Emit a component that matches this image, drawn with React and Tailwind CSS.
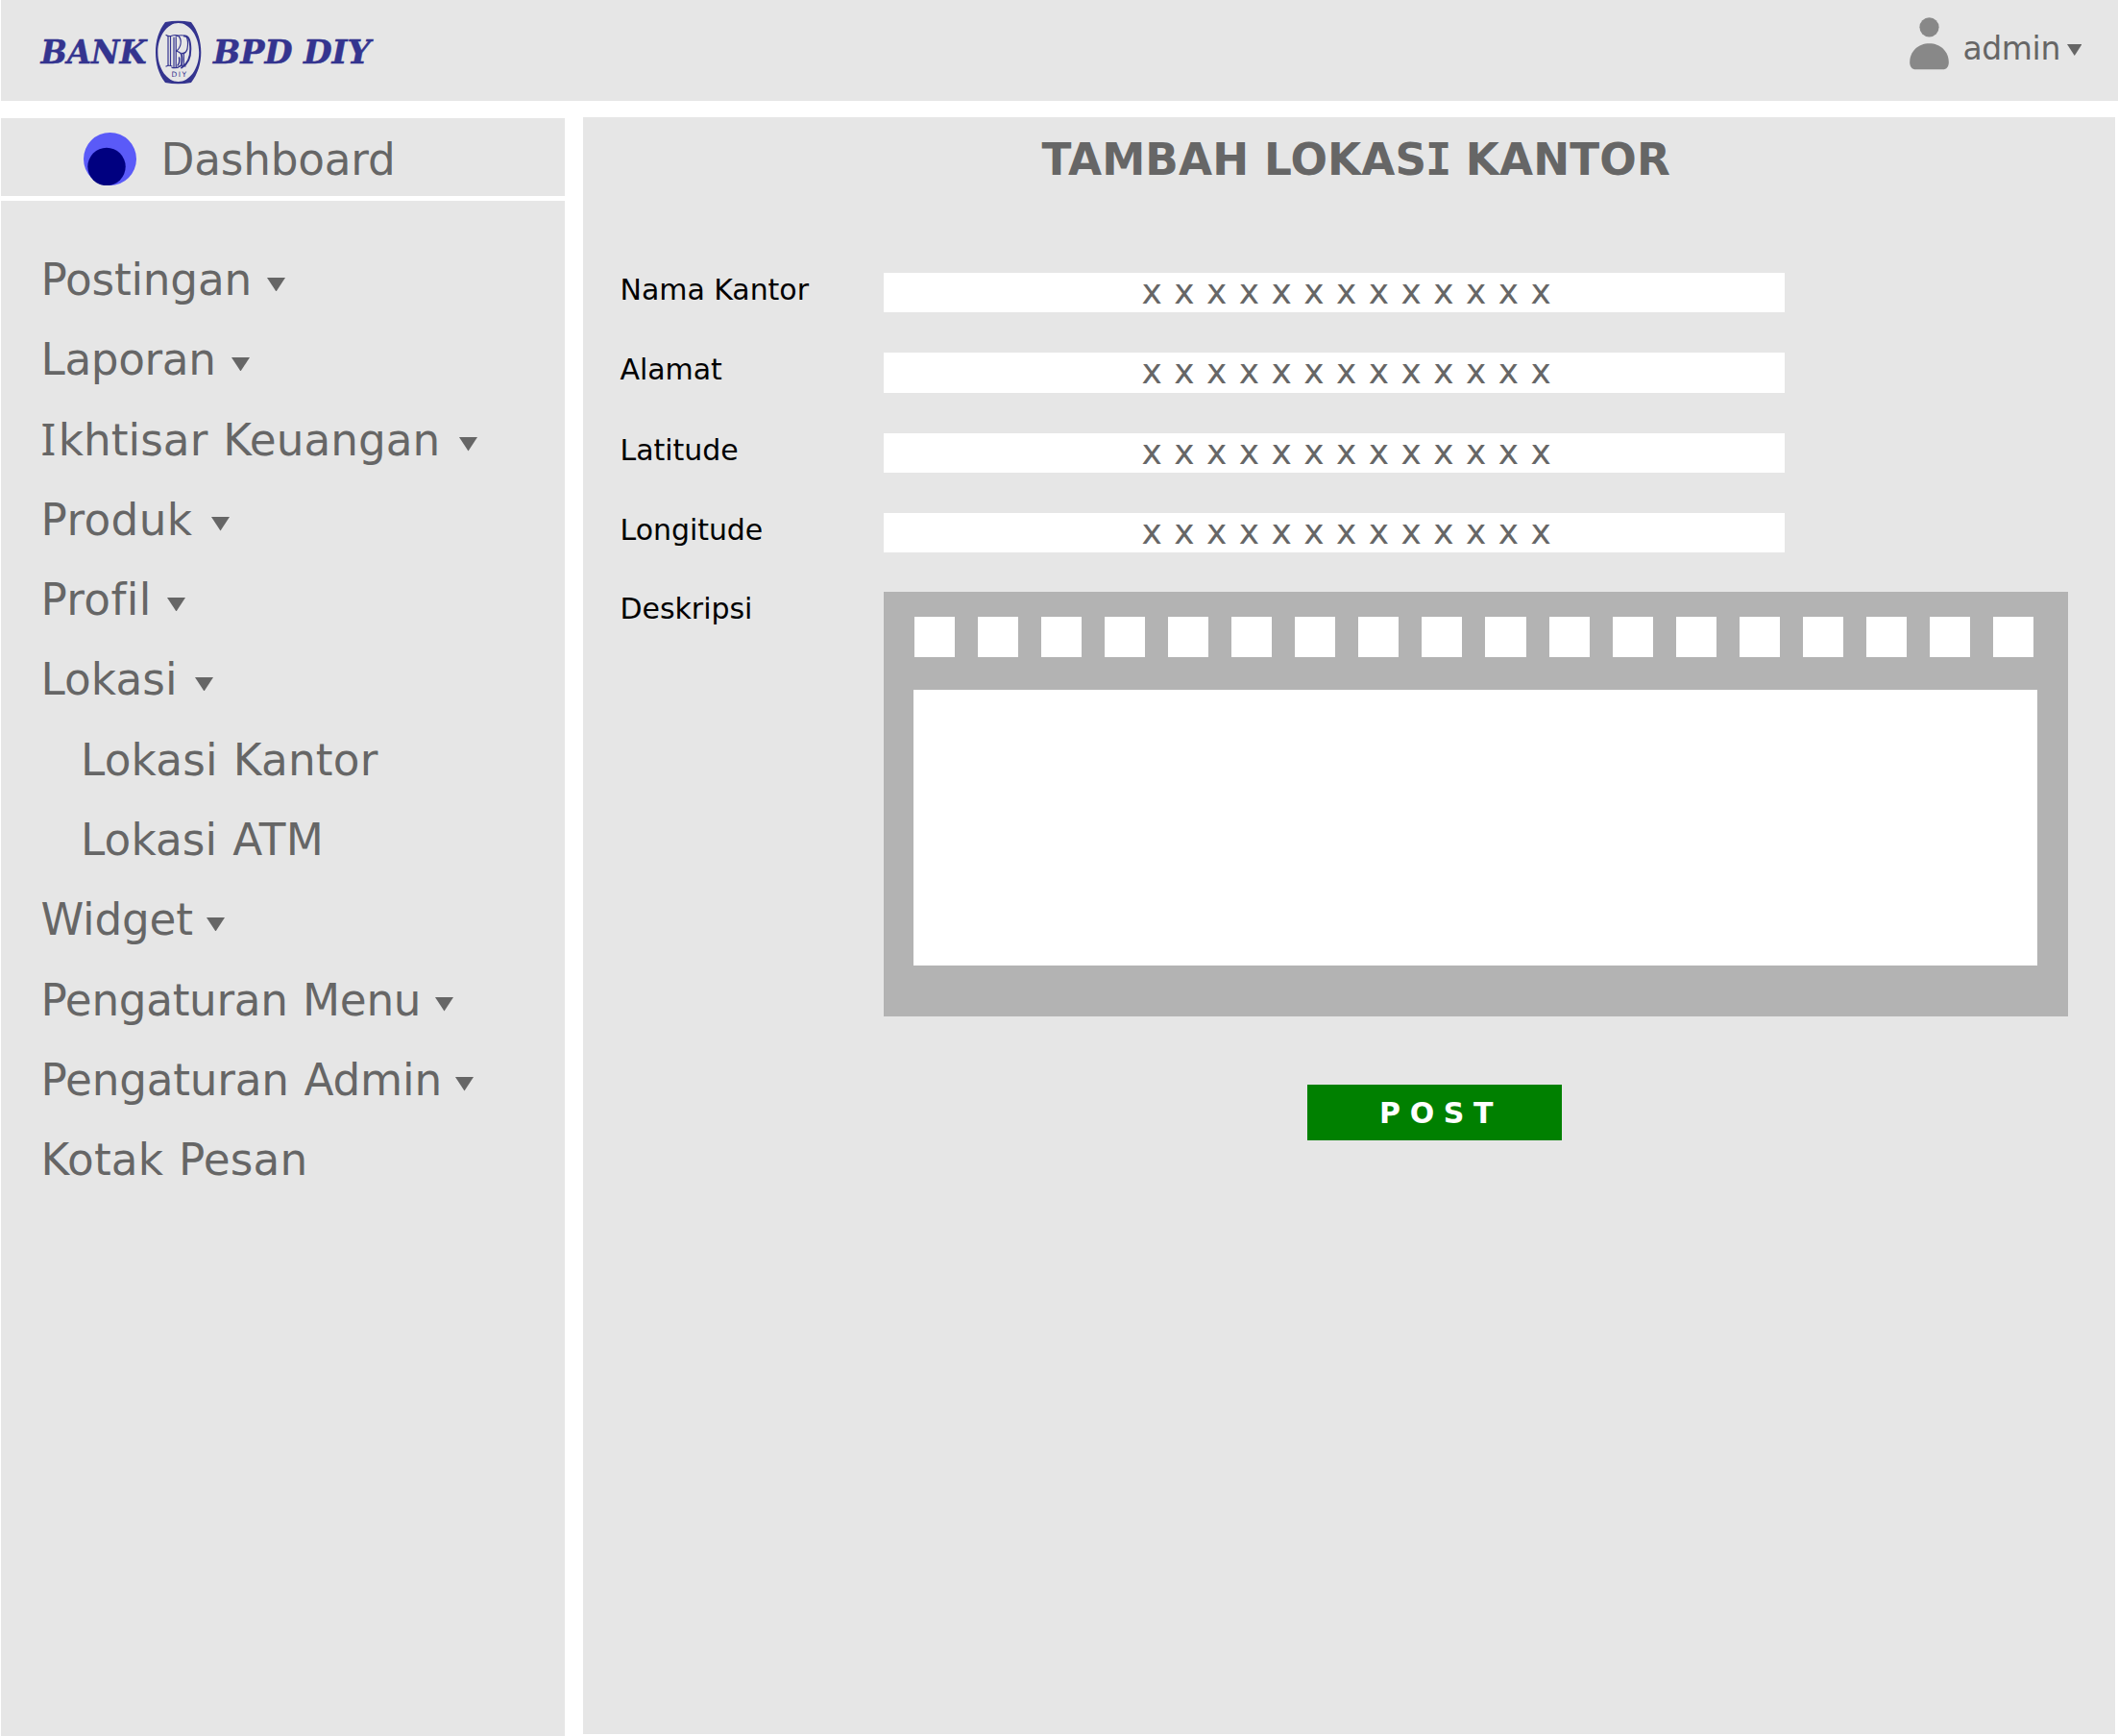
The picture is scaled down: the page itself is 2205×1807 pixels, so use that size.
import React from "react";

const menu = [
  { label: "Postingan", width: "w-[235px]", tracking: "tracking-[-0.2px]" },
  { label: "Laporan", width: "w-[198px]", tracking: "tracking-[-0.35px]" },
  { label: "Ikhtisar Keuangan", width: "w-[435px]", tracking: "tracking-[0.05px]", serifInitial: true },
  { label: "Produk", width: "w-[177px]", tracking: "tracking-[0.4px]" },
  { label: "Profil", width: "w-[131px]", tracking: "tracking-[0.35px]" },
  { label: "Lokasi", width: "w-[160px]", tracking: "tracking-[0.1px]" },
  { label: "Lokasi Kantor", child: true, tracking: "tracking-[0.2px]" },
  { label: "Lokasi ATM", child: true, tracking: "tracking-[0.12px]" },
  { label: "Widget", width: "w-[172.5px]", tracking: "tracking-[-0.2px]" },
  { label: "Pengaturan Menu", width: "w-[410px]", tracking: "tracking-[-0.33px]" },
  { label: "Pengaturan Admin", width: "w-[431px]", tracking: "tracking-[-0.2px]" },
  { label: "Kotak Pesan", tracking: "tracking-[0.12px]" },
];

const fields = ["Nama Kantor", "Alamat", "Latitude", "Longitude"];

function Caret({ className }) {
  return (
    <svg viewBox="0 0 19 15" preserveAspectRatio="none" className={className} fill="#666666">
      <path d="M0 0H19L9.5 15Z" />
    </svg>
  );
}

function Logo() {
  return (
    <svg viewBox="0 0 360 80" className="ml-[39px] mt-[14px] h-[80px] w-[360px] shrink-0" fill="#34348f">
      <g
        fontFamily="'DejaVu Serif', serif"
        fontWeight="700"
        fontStyle="italic"
        fontSize="34.4"
        stroke="#34348f"
        strokeWidth="0.5"
      >
        <text x="2.6" y="51.5" textLength="110" lengthAdjust="spacingAndGlyphs">BANK</text>
        <text x="182" y="51.5" textLength="82.500" lengthAdjust="spacingAndGlyphs">BPD</text>
        <text x="276" y="51.5" textLength="70" lengthAdjust="spacingAndGlyphs">DIY</text>
      </g>
      <path
        fillRule="evenodd"
        d="M132 9Q145.500 6.500 159 9C166 18 169.300 29 169.300 40.500C169.300 52 166 63 159 72Q145.500 74.500 132 72C125 63 122 52 122 40.500C122 29 125 18 132 9ZM145.700 10C134 10 124.300 23.500 124.300 40.500C124.300 57.500 134 71 145.700 71C157.400 71 167.200 57.500 167.200 40.500C167.200 23.500 157.400 10 145.700 10Z"
      />
      {/* interlaced monogram */}
      <g fill="none" stroke="#34348f" strokeWidth="1.200" strokeLinecap="round">
        <path d="M133 22.500Q135 24 138 23.500Q143 21.500 146 23.500Q149 27 148 32Q147 37 143.500 39" />
        <path d="M135 24V54M137.500 24V54M133 55Q136 53.500 139 55" />
        <path d="M141 25V56M143.200 25V56M139 56.500Q145 57.500 148.500 54Q151 48 149 43Q147.500 40 143.500 39" />
        <path d="M146.500 46Q147.500 51 145 54" strokeWidth="1.500" />
        <path d="M143 24Q149 21.500 154 24Q156.500 29 155 37Q153.500 42 149.500 41.500" />
        <path d="M149 41V54M151.300 41V54M147 55Q150 53.500 153 55" />
        <path d="M152 23.500Q158 22.500 158.300 37Q158.500 51 149 56.500" strokeWidth="2" />
      </g>
      <text x="138.500" y="65.500" fontFamily="'DejaVu Sans', sans-serif" fontSize="7.500" textLength="15.500">DIY</text>
    </svg>
  );
}

function Avatar() {
  return (
    <svg viewBox="0 0 41 55" className="mt-[17.500px] h-[55px] w-[41px]" fill="#888888">
      <circle cx="20.500" cy="10.300" r="10.100" />
      <path d="M0.200 47C0.200 35.500 9 27.300 20.500 27.300S40.800 35.500 40.800 47C40.800 51.500 38.500 54.300 34.500 54.300H6.500C2.500 54.300 0.200 51.500 0.200 47Z" />
    </svg>
  );
}

export default function App() {
  return (
    <div className="flex h-[1807px] w-[2205px] flex-col overflow-hidden bg-white pl-px font-['DejaVu_Sans',sans-serif] text-[#666666]">
      <header className="flex h-[105px] shrink-0 items-start justify-between bg-[#e6e6e6]">
        <Logo />
        <div className="mr-[38px] flex items-start">
          <Avatar />
          <span className="ml-[14.500px] w-[108px] whitespace-nowrap text-[33px] leading-[102px] tracking-[-0.4px]">admin</span>
          <Caret className="mt-[46px] h-[12px] w-[15.500px]" />
        </div>
      </header>

      <div className="flex min-h-0 flex-1 gap-[18.500px]">
        <aside className="flex w-[587px] shrink-0 flex-col gap-[5.500px] pt-[18px]">
          <div className="flex h-[80.500px] shrink-0 items-start bg-[#e6e6e6]">
            <svg viewBox="0 0 55 55" className="ml-[86px] mt-[15px] h-[55px] w-[55px]">
              <circle cx="27.500" cy="27.500" r="27.500" fill="#5a5af8" />
              <circle cx="24" cy="35.500" r="19.700" fill="#000080" />
            </svg>
            <span className="ml-[25.500px] text-[45.300px] leading-[87px] tracking-[-0.2px]">Dashboard</span>
          </div>
          <nav className="flex-1 bg-[#e6e6e6] pt-[41px]">
            {menu.map((m) => (
              <div
                key={m.label}
                className={
                  "flex h-[83.300px] items-start whitespace-nowrap text-[45.300px] leading-[83.300px] [word-spacing:1.5px] " +
                  m.tracking +
                  (m.child ? " pl-[83px]" : " pl-[41.500px]")
                }
              >
                <span
                  className={
                    "block " +
                    (m.width || "") +
                    (m.serifInitial ? " h-[83.300px] first-letter:font-['Noto_Sans'] first-letter:text-[46.300px] first-letter:leading-none first-letter:tracking-[2.5px]" : "")
                  }
                >
                  {m.label}
                </span>
                {m.width && <Caret className="mt-[38.500px] h-[14.500px] w-[19px]" />}
              </div>
            ))}
          </nav>
        </aside>

        <main className="mb-[2px] mr-[3px] mt-[17px] flex-1 bg-[#e6e6e6]">
          <h1 className="h-[162px] whitespace-nowrap pl-[478px] text-[45.300px] font-bold leading-[90px] tracking-[0.12px]">
            TAMBAH LOKAS<span className="mx-[-0.030em] font-['DejaVu_Sans_Mono']">I</span> KANTOR
          </h1>
          <form className="pl-[38.500px]">
            {fields.map((f) => (
              <div key={f} className="flex h-[83.300px] items-start">
                <label className="w-[275px] shrink-0 whitespace-nowrap pl-[0.500px] text-[30px] leading-[36px] tracking-[-0.05px] text-black">{f}</label>
                <div className="h-[41.400px] w-[937.500px] overflow-hidden whitespace-nowrap bg-white pl-[268.500px] text-[36px] leading-[40px] [word-spacing:1px]">
                  x x x x x x x x x x x x x
                </div>
              </div>
            ))}
            <div className="-mt-[1px] flex items-start">
              <label className="w-[275px] shrink-0 pl-[0.500px] text-[30px] leading-[36px] tracking-[-0.05px] text-black">Deskripsi</label>
              <div className="h-[441.500px] w-[1233px] bg-[#b3b3b3] pl-[30.500px] pt-[26px]">
                <div className="flex gap-[24px] pl-px">
                  {Array.from({ length: 18 }, (_, i) => (
                    <div key={i} className="h-[42px] w-[42.120px] shrink-0 bg-white" />
                  ))}
                </div>
                <div className="mt-[34px] h-[287px] w-[1170.500px] bg-white" />
              </div>
            </div>
            <button type="button" className="ml-[716px] mt-[71px] block h-[58.500px] w-[265px] bg-[#008000] pl-[75px] text-left text-[30px] font-bold leading-[60px] tracking-[-0.4px] text-white">
              P O S T
            </button>
          </form>
        </main>
      </div>
    </div>
  );
}
